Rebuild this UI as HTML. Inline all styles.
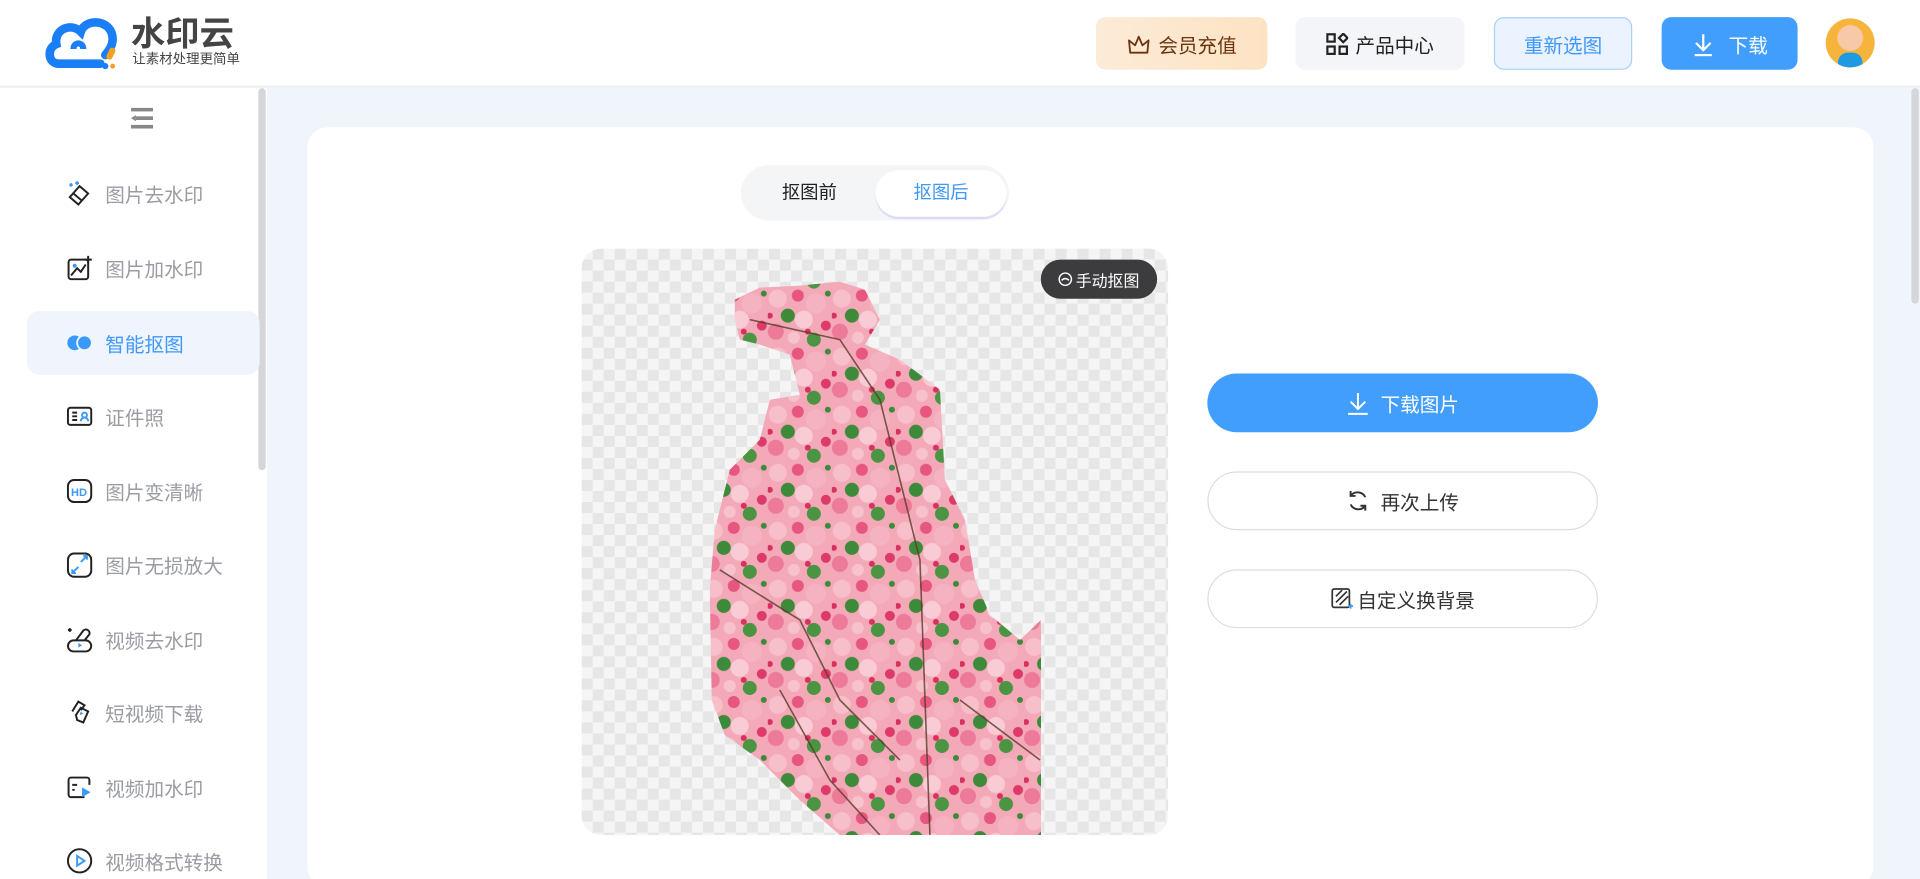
<!DOCTYPE html>
<html><head><meta charset="utf-8">
<style>
*{margin:0;padding:0;box-sizing:border-box}
html,body{width:1920px;height:879px;overflow:hidden;background:#fff}
body{font-family:"Liberation Sans","Noto Sans CJK SC",sans-serif}
#w{position:absolute;left:0;top:0;width:1568px;height:718px;transform:scale(1.22449);transform-origin:0 0;background:#f0f4fb;overflow:hidden}
.a{position:absolute}
.hdr{left:0;top:0;width:1568px;height:71px;background:#fff;border-bottom:1px solid #e9edf3}
.btn{position:absolute;top:14px;height:43px;border-radius:8px;display:flex;align-items:center;justify-content:center;font-size:16px;gap:6px}
.side{left:0;top:72px;width:218px;height:646px;background:#fff}
.mi{position:absolute;left:22px;width:190px;height:52px;display:flex;align-items:center;font-size:16px;color:#999ca3;border-radius:10px}
.mi svg{position:absolute;left:32px}
.mi span{position:absolute;left:64px}
.rb{position:absolute;left:986px;width:319px;height:48px;border-radius:24px;display:flex;align-items:center;justify-content:center;font-size:16px;gap:8px}
</style></head><body>
<div id="w">
<div class="a hdr">
 <svg class="a" style="left:36px;top:12px" width="66" height="46" viewBox="0 0 66 46">
  <path d="M12 40 C3 40 2 27 10 24 C8 12 22 6 30 14 C34 2 56 4 56 20 C56 26 52 30 50 33" fill="none" stroke="#1a7ef5" stroke-width="7" stroke-linecap="round"/>
  <path d="M12 40 H46" stroke="#1a7ef5" stroke-width="7" stroke-linecap="round"/>
  <path d="M24 28 C24 22 32 22 32 28" fill="none" stroke="#1a7ef5" stroke-width="5"/>
  <rect x="52" y="27" width="5" height="10" rx="2" fill="#f5a024" transform="rotate(25 55 32)"/>
  <circle cx="50" cy="42" r="2.5" fill="#1a7ef5"/><circle cx="56" cy="42" r="2" fill="#f5a024"/>
 </svg>
 <div class="a" style="left:107px;top:12px;font-size:28px;font-weight:bold;color:#444;line-height:32px">水印云</div>
 <div class="a" style="left:108px;top:43px;font-size:11px;color:#444;line-height:13px">让素材处理更简单</div>
 <div class="btn" style="left:895px;width:140px;background:linear-gradient(90deg,#fcebd7,#fde3c3);color:#6b3410">
  <svg width="20" height="18" viewBox="0 0 20 18"><path d="M3 16 L2 6 L7 10 L10 3 L13 10 L18 6 L17 16 Z" fill="none" stroke="#6b3410" stroke-width="1.5" stroke-linejoin="round"/></svg>会员充值</div>
 <div class="btn" style="left:1058px;width:138px;background:#f3f5f8;color:#222">
  <svg width="18" height="18" viewBox="0 0 18 18" fill="none" stroke="#222" stroke-width="1.8"><rect x="1" y="1" width="6" height="6"/><rect x="1" y="11" width="6" height="6"/><rect x="11" y="11" width="6" height="6"/><path d="M14 0.5 L17.5 4 L14 7.5 L10.5 4Z"/></svg>产品中心</div>
 <div class="btn" style="left:1220px;width:113px;background:#eaf3ff;border:1px solid #a9cffc;color:#3f98fb">重新选图</div>
 <div class="btn" style="left:1357px;width:111px;background:#419efd;color:#fff">
  <svg width="20" height="20" viewBox="0 0 20 20" fill="none" stroke="#fff" stroke-width="1.8"><path d="M10 2 V14 M4 9 L10 15 L16 9 M3 19 H17"/></svg>&nbsp;下载</div>
 <div class="a" style="left:1491px;top:15px;width:40px;height:40px;border-radius:50%;background:radial-gradient(circle at 50% 40%,#f8c9a8 0 10px,#f7b43c 11px);overflow:hidden">
  <div class="a" style="left:10px;top:28px;width:20px;height:14px;background:#1e9be0;border-radius:8px 8px 0 0"></div></div>
</div>

<div class="a side">
 <svg class="a" style="left:107px;top:16px" width="18" height="17" viewBox="0 0 18 17" fill="#888"><rect x="0" y="0" width="18" height="3"/><rect x="4" y="7" width="14" height="3"/><rect x="0" y="14" width="18" height="3"/><path d="M0 8.5 L4 6 V11Z"/></svg>
 <div class="a" style="left:211px;top:0;width:6px;height:312px;background:#d4d6da;border-radius:3px"></div>
 <div class="mi" style="top:60px"><svg width="22" height="22" viewBox="0 0 22 22" fill="none" stroke="#222" stroke-width="1.6"><path d="M3 14 L11 5 L18 11 L10 20 Z M6 11 L13 17"/><path d="M3 3 l2 2 M5 3 l-2 2 M9 1v3 M7.5 2.5h3" stroke="#3a9af9"/></svg><span>图片去水印</span></div>
 <div class="mi" style="top:121px"><svg width="22" height="22" viewBox="0 0 22 22" fill="none" stroke="#222" stroke-width="1.6"><rect x="2" y="4" width="16" height="16" rx="2"/><path d="M4 17 L9 11 L12 14 L16 8"/><circle cx="7" cy="9" r="1.6" fill="#3a9af9" stroke="none"/><path d="M18 1v6 M15 4h6"/></svg><span>图片加水印</span></div>
 <div class="mi" style="top:182px;background:#eff4fd;color:#3f98fb"><svg width="22" height="22" viewBox="0 0 22 22"><circle cx="7" cy="11" r="6" fill="#3a9af9"/><circle cx="15" cy="11" r="6" fill="#3a9af9" stroke="#eff4fd" stroke-width="1.5"/></svg><span>智能抠图</span></div>
 <div class="mi" style="top:242px"><svg width="22" height="22" viewBox="0 0 22 22" fill="none" stroke="#222" stroke-width="1.6"><rect x="1.5" y="4" width="19" height="14" rx="2"/><path d="M5 8h4 M5 11h4 M5 14h4"/><circle cx="15" cy="10" r="2" stroke="#3a9af9"/><path d="M12 15 a3 3 0 0 1 6 0" stroke="#3a9af9"/></svg><span>证件照</span></div>
 <div class="mi" style="top:303px"><svg width="22" height="22" viewBox="0 0 22 22" fill="none" stroke="#222" stroke-width="1.6"><rect x="1.5" y="2" width="19" height="18" rx="5"/><text x="4" y="15" font-size="9" font-weight="bold" fill="#3a9af9" stroke="none" font-family="Liberation Sans">HD</text></svg><span>图片变清晰</span></div>
 <div class="mi" style="top:363px"><svg width="22" height="22" viewBox="0 0 22 22" fill="none" stroke="#222" stroke-width="1.6"><rect x="1.5" y="2" width="19" height="19" rx="5"/><path d="M12 9 L17 4 M14 4h3v3 M10 13 L5 18 M5 15v3h3" stroke="#3a9af9"/></svg><span>图片无损放大</span></div>
 <div class="mi" style="top:424px"><svg width="22" height="22" viewBox="0 0 22 22" fill="none" stroke="#222" stroke-width="1.6"><rect x="1.5" y="12" width="19" height="9" rx="4.5"/><path d="M8 12 L14 4 a3 3 0 0 1 5 3 L15 12"/><path d="M10 14 v4 l3-2z" fill="#3a9af9" stroke="none"/><path d="M3 2v3 M1.5 3.5h3"/></svg><span>视频去水印</span></div>
 <div class="mi" style="top:484px"><svg width="22" height="22" viewBox="0 0 22 22" fill="none" stroke="#222" stroke-width="1.6"><path d="M5 10 L10 2 L15 5 L12 9"/><path d="M8 13 L12 7 L18 10 L14 19 L9 17 Z"/><path d="M12 10 l2 2 -3 1z" fill="#3a9af9" stroke="none"/></svg><span>短视频下载</span></div>
 <div class="mi" style="top:545px"><svg width="22" height="22" viewBox="0 0 22 22" fill="none" stroke="#222" stroke-width="1.6"><path d="M15 19 H4 a2 2 0 0 1 -2 -2 V5 a2 2 0 0 1 2 -2 H17 a2 2 0 0 1 2 2 V9"/><path d="M5 9h4 M5 13h2"/><path d="M13 11 v8 l7-4z" fill="#3a9af9" stroke="none"/></svg><span>视频加水印</span></div>
 <div class="mi" style="top:605px"><svg width="22" height="22" viewBox="0 0 22 22" fill="none" stroke="#222" stroke-width="1.6"><circle cx="11" cy="11" r="9.5"/><path d="M9 7 v8 l6-4z" stroke="#3a9af9"/></svg><span>视频格式转换</span></div>
</div>

<div class="a" style="left:251px;top:104px;width:1279px;height:620px;background:#fff;border-radius:16px"></div>
<div class="a" style="left:1561px;top:72px;width:6px;height:176px;background:#d4d6da;border-radius:3px"></div>

<div class="a" style="left:605px;top:135px;width:219px;height:45px;background:#f4f5f7;border-radius:23px"></div>
<div class="a" style="left:715px;top:139px;width:107px;height:38px;background:#fff;border-radius:19px;box-shadow:0 2px 0 #dcdcf5"></div>
<div class="a" style="left:605px;top:135px;width:112px;height:45px;line-height:45px;text-align:center;font-size:15px;color:#222">抠图前</div>
<div class="a" style="left:715px;top:139px;width:107px;height:38px;line-height:38px;text-align:center;font-size:15px;color:#3f98fb">抠图后</div>

<div class="a" style="left:475px;top:203px;width:479px;height:479px;border-radius:16px;overflow:hidden;background-color:#f5f5f5;background-image:linear-gradient(45deg,#e6e6e7 25%,transparent 25%,transparent 75%,#e6e6e7 75%),linear-gradient(45deg,#e6e6e7 25%,transparent 25%,transparent 75%,#e6e6e7 75%);background-size:18px 18px;background-position:0 0,9px 9px">
 <svg class="a" style="left:0;top:0" width="479" height="479" viewBox="582 249 586 586">
  <defs>
   <pattern id="fl" width="64" height="58" patternUnits="userSpaceOnUse">
    <rect width="64" height="58" fill="#f4a9b9"/>
    <circle cx="10" cy="9" r="9" fill="#f7bfca"/>
    <circle cx="30" cy="6" r="6" fill="#e7567f"/>
    <circle cx="48" cy="14" r="10" fill="#f5b3c1"/>
    <circle cx="20" cy="26" r="7" fill="#3c8a3a"/>
    <circle cx="36" cy="30" r="9" fill="#f9cbd4"/>
    <circle cx="58" cy="36" r="5" fill="#dd3a69"/>
    <circle cx="8" cy="42" r="8" fill="#ec7a98"/>
    <circle cx="26" cy="48" r="6" fill="#f7c2cc"/>
    <circle cx="46" cy="50" r="7" fill="#4a9442"/>
    <circle cx="60" cy="4" r="3" fill="#3c8a3a"/>
    <circle cx="2" cy="26" r="3" fill="#d8305f"/>
    <circle cx="40" cy="42" r="3" fill="#d8305f"/>
   </pattern>
   <clipPath id="cp"><path d="M735 300 L760 288 L800 286 L840 282 L865 290 L880 320 L865 345 L900 360 L940 390 L945 480 L965 520 L975 580 L990 615 L1020 640 L1041 620 L1041 835 L840 835 L800 800 L760 760 L725 735 L712 700 L710 590 L715 530 L730 470 L760 440 L770 400 L800 395 L790 355 L760 345 L740 340 L735 320 Z"/></clipPath>
  </defs>
  <g clip-path="url(#cp)">
   <rect x="700" y="280" width="345" height="560" fill="url(#fl)"/>
   <path d="M750 320 L840 340 L880 400 L920 560 L930 835 M720 570 L800 620 L840 700 L900 760 M780 690 L830 780 L880 835 M960 700 L1040 760" stroke="#5a3a2a" stroke-width="1.6" fill="none" opacity="0.8"/>
  </g>
 </svg>
 <div class="a" style="left:375px;top:9px;width:95px;height:32px;border-radius:16px;background:#3c3c3e;color:#fff;font-size:13px;display:flex;align-items:center;justify-content:center;gap:2px">
  <svg width="12" height="12" viewBox="0 0 12 12" fill="none" stroke="#fff" stroke-width="1.2"><circle cx="6" cy="6" r="5"/><path d="M3 7 q3 -3 6 0"/></svg>手动抠图</div>
</div>

<div class="rb" style="top:305px;background:#419efd;color:#fff">
 <svg width="20" height="20" viewBox="0 0 20 20" fill="none" stroke="#fff" stroke-width="1.6"><path d="M10 2 V14 M4 9 L10 15 L16 9 M2 19 H18"/></svg>下载图片</div>
<div class="rb" style="top:385px;border:1px solid #dcdde3;color:#333">
 <svg width="20" height="20" viewBox="0 0 20 20" fill="none" stroke="#333" stroke-width="1.6"><path d="M16 7 A7 7 0 0 0 4 6 M4 2 V6 H8 M4 13 A7 7 0 0 0 16 14 M16 18 V14 H12"/></svg>再次上传</div>
<div class="rb" style="top:465px;border:1px solid #dcdde3;color:#333;gap:2px">
 <svg width="20" height="20" viewBox="0 0 20 20" fill="none" stroke="#333" stroke-width="1.4"><rect x="2" y="2" width="14" height="15" rx="1.5"/><path d="M5 8 L10 3 M5 13 L14 4 M8 15 L15 8"/><path d="M17 14 v4 M15 16h4" stroke="#3a9af9"/></svg>自定义换背景</div>
</div>
</body></html>
